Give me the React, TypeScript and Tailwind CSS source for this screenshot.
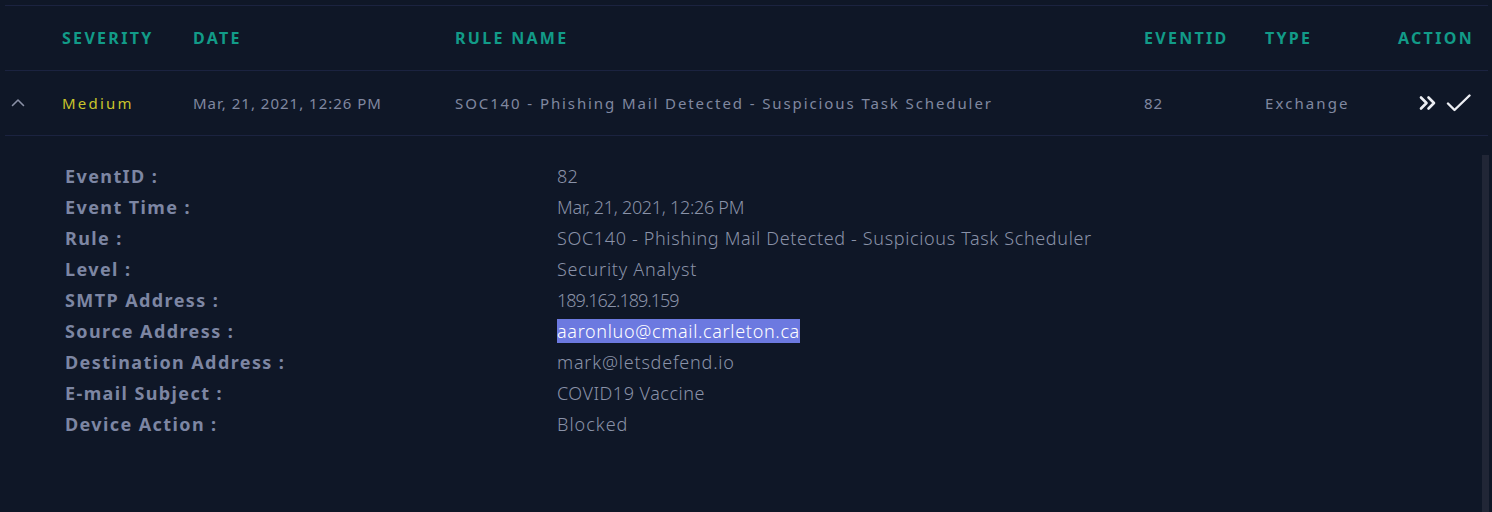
import React from "react";

const font = { fontFamily: '"Noto Sans", "DejaVu Sans", sans-serif' };

const details: [string, string, string][] = [
  ["EventID :", "82", "tracking-[0.3px]"],
  ["Event Time :", "Mar, 21, 2021, 12:26 PM", "tracking-[-0.3px]"],
  ["Rule :", "SOC140 - Phishing Mail Detected - Suspicious Task Scheduler", "tracking-[0.65px]"],
  ["Level :", "Security Analyst", "tracking-[0.75px]"],
  ["SMTP Address :", "189.162.189.159", "tracking-[-1px]"],
  ["Source Address :", "aaronluo@cmail.carleton.ca", "tracking-[0.67px]"],
  ["Destination Address :", "mark@letsdefend.io", "tracking-[0.8px]"],
  ["E-mail Subject :", "COVID19 Vaccine", "tracking-[0.5px]"],
  ["Device Action :", "Blocked", "tracking-[1px]"],
];

export default function App() {
  return (
    <div className="w-[1492px] h-[512px] overflow-hidden bg-[#0f1727]" style={font}>
      <div className="pt-[5px] pl-[5px] w-[1488px]">
        {/* header */}
        <div className="flex h-[65px] items-center border-t border-[#1b2340] text-[16px] font-bold tracking-[2.3px] text-[#129b88]">
          <div className="w-[57px]" />
          <div className="w-[131px]">SEVERITY</div>
          <div className="w-[262px]">DATE</div>
          <div className="w-[689px]">RULE NAME</div>
          <div className="w-[121px]">EVENTID</div>
          <div className="w-[133px]">TYPE</div>
          <div className="flex-1">ACTION</div>
        </div>
        {/* row */}
        <div className="flex h-[66px] items-center border-t border-b border-[#1b2340] text-[15px] tracking-[1.9px] text-[#8088a0]">
          <div className="w-[57px] pl-[5px] flex items-center">
            <svg width="16" height="16" viewBox="0 0 16 16" fill="none" stroke="#8a90a6" strokeWidth="1.6" strokeLinecap="round" strokeLinejoin="round">
              <path d="M2.5 10.5 L8 5 L13.5 10.5" />
            </svg>
          </div>
          <div className="w-[131px] text-[#c9c52b] tracking-[2.2px]">Medium</div>
          <div className="w-[262px] tracking-[1px]">Mar, 21, 2021, 12:26 PM</div>
          <div className="w-[689px]">SOC140 - Phishing Mail Detected - Suspicious Task Scheduler</div>
          <div className="w-[121px] tracking-[1px]">82</div>
          <div className="w-[133px] tracking-[2.1px]">Exchange</div>
          <div className="flex-1 flex items-center gap-[8px] pl-[20px]">
            <svg width="20" height="18" viewBox="0 0 20 18" fill="none" stroke="#eceef3" strokeWidth="2.6" strokeLinecap="round" strokeLinejoin="round">
              <path d="M3 3.5 L8.5 9 L3 14.5" />
              <path d="M10.5 3.5 L16 9 L10.5 14.5" />
            </svg>
            <svg width="26" height="18" viewBox="0 0 26 18" fill="none" stroke="#eceef3" strokeWidth="2.4" strokeLinecap="round" strokeLinejoin="round">
              <path d="M2 9.5 L8.5 16 L23.5 1.5" />
            </svg>
          </div>
        </div>
        {/* details */}
        <div className="flex">
          <div className="flex-1 pt-[25px] pl-[60px]">
            {details.map(([k, v, t]) => (
              <div key={k} className="flex h-[31px] items-center text-[18px]">
                <div className="w-[492px] font-bold tracking-[1.4px] text-[#7d86a3]">{k}</div>
                <div className={`font-light text-[#8a92a8] ${t}`}>
                  {k === "Source Address :" ? (
                    <span className="bg-[#6c79e0] text-white">{v}</span>
                  ) : (
                    v
                  )}
                </div>
              </div>
            ))}
          </div>
          <div className="mt-[19px] mr-[-1px] w-[7px] h-[360px] bg-[#212636]" />
        </div>
      </div>
    </div>
  );
}
